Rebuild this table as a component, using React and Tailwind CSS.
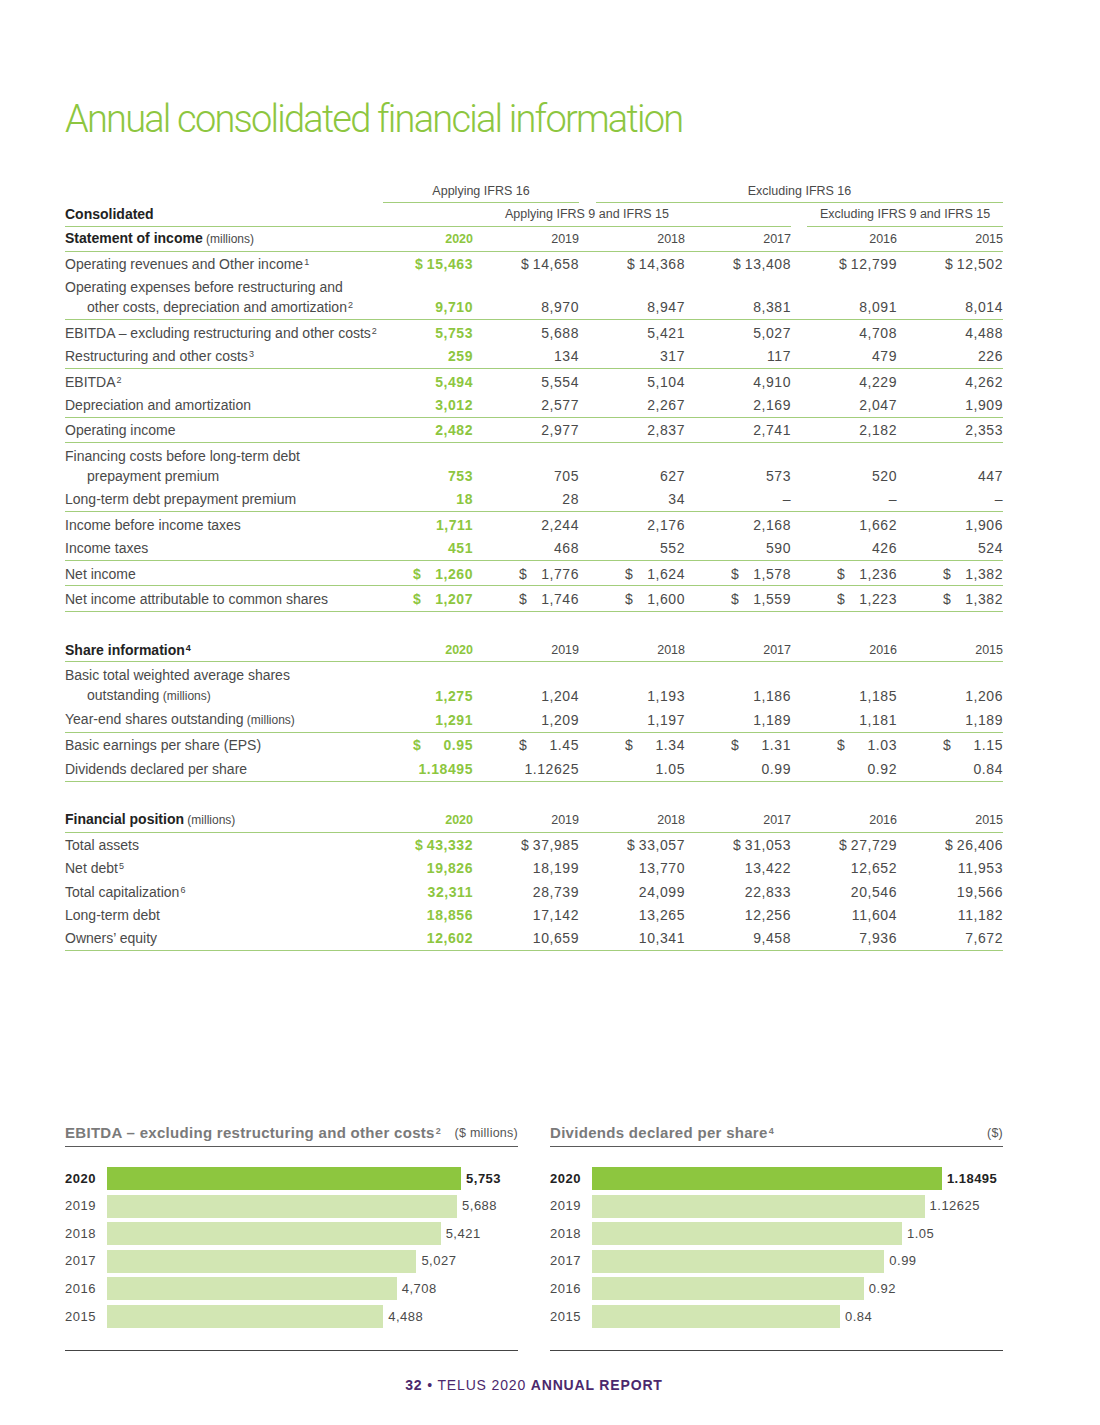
import React from "react";

const FONT = { fontFamily: '"Liberation Sans", Arial, sans-serif' };

const statement = [
  [
    { label: "Operating revenues and Other income", sup: "1", vals: ["$\u200915,463", "$\u200914,658", "$\u200914,368", "$\u200913,408", "$\u200912,799", "$\u200912,502"] },
    { label: "Operating expenses before restructuring and", label2: "other costs, depreciation and amortization", sup2: "2", vals: ["9,710", "8,970", "8,947", "8,381", "8,091", "8,014"] },
  ],
  [
    { label: "EBITDA – excluding restructuring and other costs", sup: "2", vals: ["5,753", "5,688", "5,421", "5,027", "4,708", "4,488"] },
    { label: "Restructuring and other costs", sup: "3", vals: ["259", "134", "317", "117", "479", "226"] },
  ],
  [
    { label: "EBITDA", sup: "2", vals: ["5,494", "5,554", "5,104", "4,910", "4,229", "4,262"] },
    { label: "Depreciation and amortization", vals: ["3,012", "2,577", "2,267", "2,169", "2,047", "1,909"] },
  ],
  [{ label: "Operating income", vals: ["2,482", "2,977", "2,837", "2,741", "2,182", "2,353"] }],
  [
    { label: "Financing costs before long-term debt", label2: "prepayment premium", vals: ["753", "705", "627", "573", "520", "447"] },
    { label: "Long-term debt prepayment premium", vals: ["18", "28", "34", "–", "–", "–"] },
  ],
  [
    { label: "Income before income taxes", vals: ["1,711", "2,244", "2,176", "2,168", "1,662", "1,906"] },
    { label: "Income taxes", vals: ["451", "468", "552", "590", "426", "524"] },
  ],
  [{ label: "Net income", dollar: true, vals: ["1,260", "1,776", "1,624", "1,578", "1,236", "1,382"] }],
  [{ label: "Net income attributable to common shares", dollar: true, vals: ["1,207", "1,746", "1,600", "1,559", "1,223", "1,382"] }],
];

const shares = [
  [
    { label: "Basic total weighted average shares", label2: "outstanding", small2: " (millions)", vals: ["1,275", "1,204", "1,193", "1,186", "1,185", "1,206"] },
    { label: "Year-end shares outstanding", small: " (millions)", vals: ["1,291", "1,209", "1,197", "1,189", "1,181", "1,189"] },
  ],
  [
    { label: "Basic earnings per share (EPS)", dollar: true, vals: ["0.95", "1.45", "1.34", "1.31", "1.03", "1.15"] },
    { label: "Dividends declared per share", vals: ["1.18495", "1.12625", "1.05", "0.99", "0.92", "0.84"] },
  ],
];

const position = [
  [
    { label: "Total assets", vals: ["$\u200943,332", "$\u200937,985", "$\u200933,057", "$\u200931,053", "$\u200927,729", "$\u200926,406"] },
    { label: "Net debt", sup: "5", vals: ["19,826", "18,199", "13,770", "13,422", "12,652", "11,953"] },
    { label: "Total capitalization", sup: "6", vals: ["32,311", "28,739", "24,099", "22,833", "20,546", "19,566"] },
    { label: "Long-term debt", vals: ["18,856", "17,142", "13,265", "12,256", "11,604", "11,182"] },
    { label: "Owners’ equity", vals: ["12,602", "10,659", "10,341", "9,458", "7,936", "7,672"] },
  ],
];

const years = ["2020", "2019", "2018", "2017", "2016", "2015"];

function Sup({ children }) {
  return <span className="relative top-[-0.45em] ml-[1px] text-[9px] leading-none">{children}</span>;
}

function Cell({ v, i, dollar }) {
  const cls = i === 0 ? "text-[#8dc63f] font-bold" : "text-[#4a4a4a]";
  if (dollar) {
    return (
      <div className="flex justify-end">
        <div className={`flex justify-between w-[60px] tracking-[0.04em] ${cls}`}>
          <span>$</span>
          <span>{v}</span>
        </div>
      </div>
    );
  }
  return <div className={`text-right tracking-[0.04em] ${cls}`}>{v}</div>;
}

function Row({ r }) {
  return (
    <div className="grid grid-cols-[302px_repeat(6,106px)] items-end py-[1.6px] leading-[20px] text-[14px]">
      <div className="text-[#4a4a4a] whitespace-nowrap">
        <div>
          {r.label}
          {r.sup && <Sup>{r.sup}</Sup>}
          {r.small && <span className="text-[12px]">{r.small}</span>}
        </div>
        {r.label2 && (
          <div className="pl-[22px]">
            {r.label2}
            {r.sup2 && <Sup>{r.sup2}</Sup>}
            {r.small2 && <span className="text-[12px]">{r.small2}</span>}
          </div>
        )}
      </div>
      {r.vals.map((v, i) => (
        <Cell key={i} v={v} i={i} dollar={r.dollar} />
      ))}
    </div>
  );
}

function Groups({ groups }) {
  return groups.map((g, gi) => (
    <div key={gi} className="border-b border-[#a3ce7c] pt-[1px] pb-[0.4px]">
      {g.map((r, ri) => (
        <Row key={ri} r={r} />
      ))}
    </div>
  ));
}

function HeaderRow({ title, sup, small }) {
  return (
    <div className="grid grid-cols-[302px_repeat(6,106px)] items-end border-b border-[#a3ce7c] py-[1.5px] leading-[20px]">
      <div className="text-[14px] font-bold text-[#222] whitespace-nowrap">
        {title}
        {sup && <Sup>{sup}</Sup>}
        {small && <span className="text-[12px] font-normal text-[#4a4a4a]">{small}</span>}
      </div>
      {years.map((y, i) => (
        <div key={y} className={`text-right text-[12.5px] ${i === 0 ? "font-bold text-[#8dc63f]" : "text-[#4a4a4a]"}`}>
          {y}
        </div>
      ))}
    </div>
  );
}

function BarChart({ title, sup, unit, data, scale }) {
  return (
    <div className="w-[453px]">
      <div className="flex items-end justify-between border-b border-[#5a5a5a] pb-[3px]">
        <div className="whitespace-nowrap text-[15px] font-bold text-[#7a7a7a] leading-[20px] tracking-[0.02em]">
          {title}
          <Sup>{sup}</Sup>
        </div>
        <div className="whitespace-nowrap text-[12.5px] text-[#555] leading-[20px] tracking-[0.02em]">{unit}</div>
      </div>
      <div className="mt-[20px] flex flex-col gap-[4.6px] tracking-[0.03em]">
        {data.map((d, i) => (
          <div key={d.y} className="flex items-center h-[23px]">
            <div className={`w-[42px] text-[13px] ${i === 0 ? "font-bold text-[#222]" : "text-[#4a4a4a]"}`}>{d.y}</div>
            <div className={`h-[23px] ${i === 0 ? "bg-[#8dc63f]" : "bg-[#d2e6b3]"}`} style={{ width: `${d.v * scale}px` }} />
            <div className={`ml-[5px] text-[13px] ${i === 0 ? "font-bold text-[#222]" : "text-[#4a4a4a]"}`}>{d.l}</div>
          </div>
        ))}
      </div>
      <div className="mt-[22px] border-t border-[#444]" />
    </div>
  );
}

export default function App() {
  const ebitda = [
    { y: "2020", v: 5753, l: "5,753" },
    { y: "2019", v: 5688, l: "5,688" },
    { y: "2018", v: 5421, l: "5,421" },
    { y: "2017", v: 5027, l: "5,027" },
    { y: "2016", v: 4708, l: "4,708" },
    { y: "2015", v: 4488, l: "4,488" },
  ];
  const divs = [
    { y: "2020", v: 1.18495, l: "1.18495" },
    { y: "2019", v: 1.12625, l: "1.12625" },
    { y: "2018", v: 1.05, l: "1.05" },
    { y: "2017", v: 0.99, l: "0.99" },
    { y: "2016", v: 0.92, l: "0.92" },
    { y: "2015", v: 0.84, l: "0.84" },
  ];
  return (
    <div className="w-[1100px] h-[1425px] bg-white" style={FONT}>
      <div className="ml-[65px] w-[938px] pt-[96px]">
        <h1
          className="text-[38px] leading-[46px] font-light tracking-[-0.047em] text-[#8dc63f]"
          style={{ fontFamily: 'Roboto, "Liberation Sans", sans-serif' }}
        >
          Annual consolidated financial information
        </h1>

        <div className="mt-[40px]">
          <div className="grid grid-cols-[302px_repeat(6,106px)] text-[12.5px] text-[#4a4a4a] leading-[18px]">
            <div />
            <div className="col-span-2">
              <div className="ml-[16px] border-b border-[#a3ce7c] pb-[2px] text-center">Applying IFRS 16</div>
            </div>
            <div className="col-span-4">
              <div className="ml-[17px] border-b border-[#a3ce7c] pb-[2px] text-center">Excluding IFRS 16</div>
            </div>
          </div>
          <div className="grid grid-cols-[302px_repeat(6,106px)] items-end leading-[20px] mt-[1px]">
            <div className="border-b border-[#a3ce7c] pb-[1.5px] text-[14px] font-bold text-[#222]">Consolidated</div>
            <div className="col-span-4 border-b border-[#a3ce7c] pl-[16px] pb-[1.5px] text-center text-[12.5px] text-[#4a4a4a]">
              Applying IFRS 9 and IFRS 15
            </div>
            <div className="col-span-2">
              <div className="ml-[16px] border-b border-[#a3ce7c] pb-[1.5px] text-center text-[12.5px] text-[#4a4a4a]">
                Excluding IFRS 9 and IFRS 15
              </div>
            </div>
          </div>
          <HeaderRow title="Statement of income" small=" (millions)" />
          <Groups groups={statement} />

          <div className="mt-[26px]">
            <HeaderRow title="Share information" sup="4" />
            <Groups groups={shares} />
          </div>

          <div className="mt-[26px]">
            <HeaderRow title="Financial position" small=" (millions)" />
            <Groups groups={position} />
          </div>
        </div>

        <div className="mt-[172px] flex justify-between">
          <BarChart title="EBITDA – excluding restructuring and other costs" sup="2" unit="($ millions)" data={ebitda} scale={0.06155} />
          <BarChart title="Dividends declared per share" sup="4" unit="($)" data={divs} scale={295.3} />
        </div>

        <div className="mt-[24px] text-center text-[14px] tracking-[0.06em] text-[#4b286d]">
          <span className="font-bold">32</span> • TELUS 2020 <span className="font-bold">ANNUAL REPORT</span>
        </div>
      </div>
    </div>
  );
}
